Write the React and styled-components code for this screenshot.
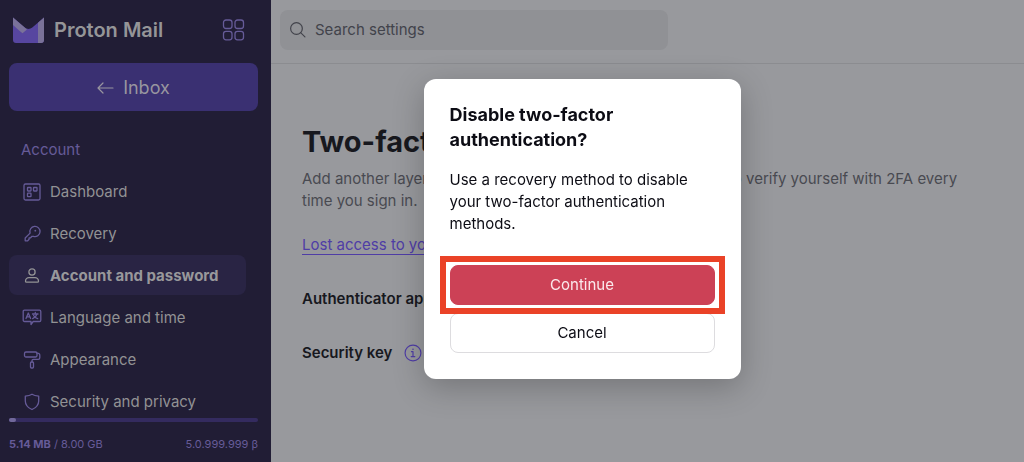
import React from "react";
import styled, { createGlobalStyle } from "styled-components";

const GlobalStyle = createGlobalStyle`
  *, *::before, *::after { box-sizing: border-box; }
  body { margin: 0; font-family: Inter, "Liberation Sans", sans-serif; font-size: 15px; line-height: 22px; background: #98999d; }
  h1, h2, p, ul { margin: 0; padding: 0; }
  button, input { font: inherit; }
`;

const Shell = styled.div`
  display: flex;
  height: 100vh;
  overflow: hidden;
`;

const Sidebar = styled.aside`
  display: flex;
  flex-direction: column;
  flex: 0 0 271px;
  background: #211d35;
  color: #959598;
`;

const Brand = styled.div`
  display: flex;
  align-items: center;
  height: 63px;
  padding: 0 26px 4px 13px;
`;

const BrandName = styled.span`
  flex: 1;
  margin-left: 10px;
  font-size: 20px;
  font-weight: 600;
`;

const AppsButton = styled.button`
  display: flex;
  padding: 0;
  border: 0;
  background: none;
  color: #665b98;
`;

const InboxButton = styled.button`
  display: flex;
  flex-shrink: 0;
  align-items: center;
  justify-content: center;
  gap: 9px;
  height: 48px;
  margin: 0 13px 0 9px;
  padding: 2px 0 0;
  border: 0;
  border-radius: 8px;
  background: #3a3072;
  color: #98959f;
  font-size: 18px;
`;

const Nav = styled.nav`
  flex: 1;
  min-height: 0;
  overflow: hidden;
  padding: 28px 25px 0 9px;
`;

const SectionName = styled.h2`
  padding-left: 12px;
  margin-bottom: 10px;
  color: #665b98;
  font-size: 15px;
  font-weight: 400;
`;

const NavList = styled.ul`
  display: flex;
  flex-direction: column;
  gap: 2px;
  list-style: none;
`;

const NavLink = styled.a`
  display: flex;
  align-items: center;
  gap: 8px;
  height: 40px;
  padding: 1px 0 0 13px;
  border-radius: 8px;
  background: ${(p) => (p.$active ? "#292444" : "transparent")};
  color: ${(p) => (p.$active ? "#98989b" : "#929294")};
  font-weight: ${(p) => (p.$active ? 700 : 400)};
  text-decoration: none;

  svg { color: ${(p) => (p.$active ? "#929294" : "#665b98")}; }
`;

const Storage = styled.footer`
  padding: 0 13px 8px 9px;
  color: #665b98;
  font-size: 11px;
  line-height: 20px;
`;

const Track = styled.div`
  height: 4px;
  margin-bottom: 12px;
  border-radius: 2px;
  background: #342b5f;
`;

const Used = styled.div`
  width: 3%;
  height: 100%;
  border-radius: 2px;
  background: #71689b;
`;

const StorageRow = styled.div`
  display: flex;
  justify-content: space-between;
`;

const Main = styled.div`
  flex: 1;
  min-width: 0;
  background: #98999d;
  color: #17181e;
`;

const Header = styled.header`
  height: 64px;
  padding: 10px 9px;
  border-bottom: 1px solid #8b8c90;
`;

const Search = styled.label`
  display: flex;
  align-items: center;
  gap: 8px;
  max-width: 388px;
  height: 40px;
  padding: 0 9px;
  border-radius: 8px;
  background: #909195;
  color: #42434b;
`;

const SearchInput = styled.input`
  flex: 1;
  min-width: 0;
  padding: 0;
  border: 0;
  outline: 0;
  background: none;
  color: inherit;

  &::placeholder { color: inherit; opacity: 1; }
`;

const Content = styled.main`
  padding: 60px 48px 0 31px;
`;

const PageTitle = styled.h1`
  margin-bottom: 8px;
  font-size: 29px;
  line-height: 36px;
  font-weight: 700;
`;

const Intro = styled.p`
  max-width: 672px;
  margin-bottom: 22px;
  color: #494a51;
`;

const TextLink = styled.a`
  color: #4f3da6;
  text-decoration: underline #4f3da6;
  text-underline-offset: 4px;
`;

const Setting = styled.div`
  display: flex;
  align-items: center;
  gap: 12px;
  margin-top: 32px;
  font-weight: 600;
`;

const InfoButton = styled.button`
  display: flex;
  padding: 0;
  border: 0;
  background: none;
  color: #4f3da6;
`;

const Backdrop = styled.div`
  position: fixed;
  inset: 0;
  display: flex;
  align-items: center;
  justify-content: center;
  padding: 0 0 4px 140px;
`;

const Dialog = styled.section`
  width: 317px;
  padding: 23px 26px 26px;
  border-radius: 12px;
  background: #fff;
  color: #0c0c14;
  box-shadow: 0 8px 32px rgba(0, 0, 0, 0.24);
`;

const DialogTitle = styled.h2`
  margin-bottom: 17px;
  font-size: 18px;
  line-height: 25px;
  font-weight: 700;
`;

const DialogText = styled.p`
  margin-bottom: 30px;
`;

const Actions = styled.div`
  display: flex;
  flex-direction: column;
  gap: 8px;
`;

const Highlight = styled.div`
  position: relative;
  display: grid;

  &::after {
    content: "";
    position: absolute;
    inset: -9px -10px;
    border: 6px solid #ea4227;
    pointer-events: none;
  }
`;

const ActionButton = styled.button`
  height: 40px;
  border: 1px solid ${(p) => (p.$danger ? "#cc4156" : "#dddcdf")};
  border-radius: 8px;
  background: ${(p) => (p.$danger ? "#cc4156" : "#fff")};
  color: ${(p) => (p.$danger ? "#fbe9ec" : "#0c0c14")};
`;

function Icon({ size = 20, width = 1.3, children }) {
  return (
    <svg width={size} height={size} viewBox="0 0 20 20" fill="none" stroke="currentColor"
      strokeWidth={width} strokeLinecap="round" strokeLinejoin="round" aria-hidden="true">
      {children}
    </svg>
  );
}

const icons = {
  dashboard: (
    <>
      <rect x="2" y="2" width="16" height="16" rx="1.5" />
      <rect x="5.5" y="5.5" width="3.5" height="3.5" rx=".5" />
      <rect x="11.5" y="5.5" width="3.5" height="3.5" rx=".5" />
      <rect x="5.5" y="11.2" width="3.5" height="3.5" rx=".5" />
    </>
  ),
  key: (
    <>
      <path d="M8.1 9.1A5.1 5.1 0 1 1 11.5 12.4L10 12.3 8.6 13.8H7.1V15.3L5.7 16.8H3.2V14Z" />
      <circle cx="13.3" cy="6.7" r=".9" fill="currentColor" stroke="none" />
    </>
  ),
  user: (
    <>
      <circle cx="10" cy="6" r="3.1" />
      <path d="M7 11.6h6c2 0 3.5 1.8 3.5 3.6 0 .7-.4 1-1 1h-11c-.6 0-1-.3-1-1C3.5 13.4 5 11.6 7 11.6Z" />
    </>
  ),
  language: (
    <>
      <path d="M2.5 2.2h15c.8 0 1.3.5 1.3 1.3v8.7c0 .8-.5 1.3-1.3 1.3h-6.3L9 16.5v-3H2.5c-.8 0-1.3-.5-1.3-1.3V3.5c0-.8.5-1.3 1.3-1.3Z" />
      <path d="m4 10.5 2.3-5.5 2.3 5.5M4.8 8.8h3M10.5 6h5.5M13.3 4.5v1.5M15 6c-.6 2.1-2.2 3.8-4.3 4.7M11.6 7.5c.8 1.5 2.2 2.6 4.1 3.2" />
    </>
  ),
  roller: (
    <>
      <rect x="2.5" y="2" width="12.5" height="5" rx="1.5" />
      <path d="M15 3.2c1.7 0 2.8.8 2.8 2v2.5c0 1-.6 1.6-1.6 1.6h-4.7c-1 0-1.5.5-1.5 1.3V12" />
      <rect x="8.5" y="12" width="3" height="6" rx="1" />
    </>
  ),
  shield: <path d="M10 2.2c2 1.3 4 1.7 6.7 1.9v4.8c0 4-2.9 6.8-6.7 8.6-3.8-1.8-6.7-4.6-6.7-8.6V4.1C6 3.9 8 3.5 10 2.2Z" />,
};

const sections = [
  ["Dashboard", "dashboard"],
  ["Recovery", "key"],
  ["Account and password", "user", true],
  ["Language and time", "language"],
  ["Appearance", "roller"],
  ["Security and privacy", "shield"],
];

function Logo() {
  return (
    <svg width="31" height="26" viewBox="0 0 31 26" aria-hidden="true">
      <path d="M0 .6 11.7 10.5c2.2 1.9 5.4 1.9 7.6 0L31 .6V23c0 1.7-1.2 3-3 3H3c-1.8 0-3-1.3-3-3Z" fill="#5746a0" />
      <path d="M0 .6 14 12.4 9.5 16.3 6.7 14 0 8Z" fill="#7a7299" />
      <path d="M25 5.7 31 .6V23c0 1.7-1.2 3-3 3h-3Z" fill="#7a7299" />
    </svg>
  );
}

export default function App() {
  return (
    <>
      <GlobalStyle />
      <Shell>
        <Sidebar>
          <Brand>
            <Logo />
            <BrandName>Proton Mail</BrandName>
            <AppsButton aria-label="Proton apps">
              <svg width="23" height="22" viewBox="0 0 23 22" fill="none" stroke="currentColor" strokeWidth="1.3" aria-hidden="true">
                <rect x="1.5" y="1" width="8.5" height="8.5" rx="2.5" />
                <rect x="13" y="1" width="8.5" height="8.5" rx="2.5" />
                <rect x="1.5" y="12.3" width="8.5" height="8.5" rx="2.5" />
                <rect x="13" y="12.3" width="8.5" height="8.5" rx="2.5" />
              </svg>
            </AppsButton>
          </Brand>
          <InboxButton>
            <svg width="17" height="12" viewBox="0 0 17 12" fill="none" stroke="currentColor" strokeWidth="1.2" strokeLinecap="round" strokeLinejoin="round" aria-hidden="true">
              <path d="M6 1 1 6l5 5M1 6h15" />
            </svg>
            Inbox
          </InboxButton>
          <Nav aria-label="Settings">
            <SectionName>Account</SectionName>
            <NavList>
              {sections.map(([label, icon, active]) => (
                <li key={label}>
                  <NavLink href="#" $active={active} aria-current={active ? "page" : undefined}>
                    <Icon>{icons[icon]}</Icon>
                    {label}
                  </NavLink>
                </li>
              ))}
            </NavList>
          </Nav>
          <Storage>
            <Track><Used /></Track>
            <StorageRow>
              <span><b>5.14 MB</b> / 8.00 GB</span>
              <span>5.0.999.999 β</span>
            </StorageRow>
          </Storage>
        </Sidebar>
        <Main>
          <Header>
            <Search>
              <Icon size={18}>
                <circle cx="8.3" cy="8.3" r="6.5" />
                <path d="m13 13 4.7 4.7" />
              </Icon>
              <SearchInput type="text" placeholder="Search settings" aria-label="Search settings" />
            </Search>
          </Header>
          <Content>
            <PageTitle>Two-factor authentication</PageTitle>
            <Intro>
              Add another layer of security for your accounts. You’ll need to verify yourself with 2FA every time you sign in.
            </Intro>
            <TextLink href="#">Lost access to your 2FA device?</TextLink>
            <Setting>Authenticator app</Setting>
            <Setting>
              Security key
              <InfoButton aria-label="More about security keys">
                <Icon size={18}>
                  <circle cx="10" cy="10" r="8.8" />
                  <path d="M8.3 8.5H10V14M8 14h4" />
                  <circle cx="10" cy="5.8" r=".9" fill="currentColor" stroke="none" />
                </Icon>
              </InfoButton>
            </Setting>
          </Content>
        </Main>
      </Shell>
      <Backdrop>
        <Dialog role="dialog" aria-modal="true" aria-labelledby="dialog-title">
          <DialogTitle id="dialog-title">Disable two-factor authentication?</DialogTitle>
          <DialogText>Use a recovery method to disable your two-factor authentication methods.</DialogText>
          <Actions>
            <Highlight>
              <ActionButton $danger>Continue</ActionButton>
            </Highlight>
            <ActionButton>Cancel</ActionButton>
          </Actions>
        </Dialog>
      </Backdrop>
    </>
  );
}
